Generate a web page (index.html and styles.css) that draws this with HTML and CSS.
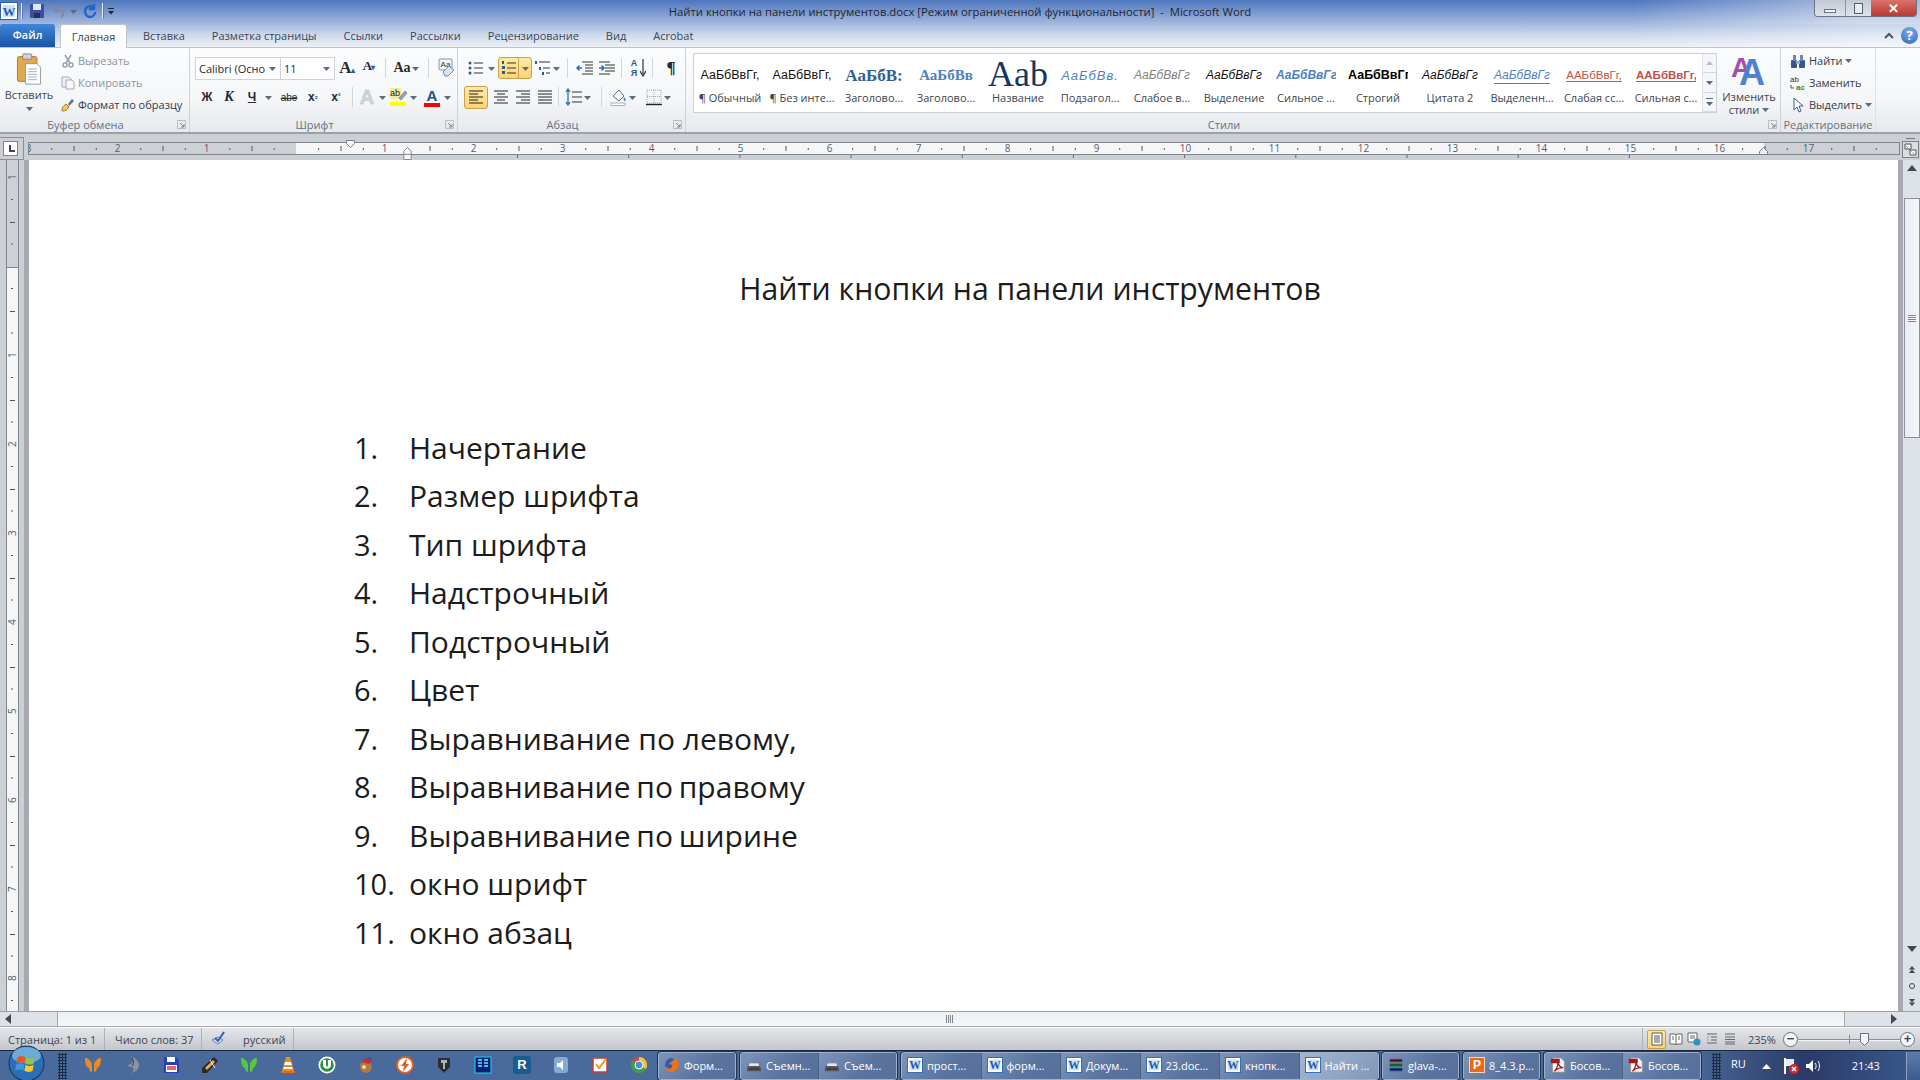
FILE: index.html
```html
<!DOCTYPE html>
<html lang="ru">
<head>
<meta charset="utf-8">
<title>Microsoft Word</title>
<link rel="stylesheet" href="styles.css">
</head>
<body>
<svg class="defs" width="0" height="0">
  <symbol id="word" viewBox="0 0 18 18"><rect x=".5" y=".5" width="17" height="17" fill="#fff" stroke="#2a63ad"/><rect x="3" y="3" width="12" height="12" fill="#cfe0f5"/><text x="9" y="14" font-size="13" font-weight="700" text-anchor="middle" fill="#1d5bb0" font-family="Liberation Serif">W</text></symbol>
  <symbol id="pdf" viewBox="0 0 18 18"><path d="M3 1h9l4 4v12H3z" fill="#fff" stroke="#999"/><path d="M1 2h10v5H1z" fill="#a8141c"/><path d="M5 16c3-3 4-7 4-10 1 4 3 6 6 6-4 0-7 1-10 4z" fill="none" stroke="#b3121c" stroke-width="1.5"/></symbol>
  <symbol id="drive" viewBox="0 0 18 18"><path d="M4 7h10l3 6v3H1v-3z" fill="#55575c"/><path d="M4 7h10l1 3H3z" fill="#e8e8e8"/><rect x="3" y="13" width="12" height="1" fill="#222"/></symbol>
  <symbol id="arrow" viewBox="0 0 7 5"><path d="M0 1h7L3.500 5z" fill="#5d6b7c"/></symbol>
  <symbol id="launch" viewBox="0 0 9 9"><path d="M.5.5h8v8h-8z" fill="none" stroke="#b8bec6"/><path d="M3 3l4 4M7 4v3H4" fill="none" stroke="#78828e"/></symbol>
  <symbol id="butterfly" viewBox="0 0 18 18"><path d="M8 8C6 3 3 2 1 2c0 5 1 9 4 10 0 2 1 4 3 4zM10 8c2-5 5-6 7-6 0 5-1 9-4 10 0 2-1 4-3 4z" fill="currentColor"/></symbol>
</svg>

<header class="titlebar">
  <div class="qat">
    <svg class="i18 qword"><use href="#word"/></svg>
    <span class="qsep"></span>
    <svg class="i16 qsave" viewBox="0 0 16 16"><rect x="1" y="1" width="14" height="14" rx="1" fill="#3b4f9e"/><rect x="4" y="1" width="8" height="6" fill="#dfe6f5"/><rect x="5" y="10" width="6" height="5" fill="#2a2f55"/></svg>
    <svg class="i16 qundo" viewBox="0 0 16 16"><path d="M4 3v5h5M5 8c3-4 8-2 7 3-.3 1.500-1 2.500-2 3" fill="none" stroke="#7f8a9e" stroke-width="2.400"/></svg>
    <svg class="a7 qarrow"><use href="#arrow"/></svg>
    <svg class="i16 qredo" viewBox="0 0 16 16"><path d="M12 1v5H7M12 5C8 1 3 4 3 8.500c0 3 2.500 5.500 5 5.500s5-2 5-5" fill="none" stroke="#1f69c4" stroke-width="2.400"/></svg>
    <span class="qsep qsep2"></span>
    <svg class="i8 qcust" viewBox="0 0 8 8"><path d="M1 1h6v1H1zM1 4h6L4 7.500z" fill="#20242c"/></svg>
  </div>
  <div class="doc-title">Найти кнопки на панели инструментов.docx [Режим ограниченной функциональности]  -  Microsoft Word</div>
  <div class="winbtns">
    <span class="wb wmin"><span class="minbar"></span></span>
    <span class="wb wmax"><span class="maxbox"></span></span>
    <span class="wb wclose">✕</span>
  </div>
</header>

<nav class="tabs">
  <span class="tab-file">Файл</span>
  <span class="tab-active">Главная</span>
  <span class="tab">Вставка</span>
  <span class="tab">Разметка страницы</span>
  <span class="tab">Ссылки</span>
  <span class="tab">Рассылки</span>
  <span class="tab">Рецензирование</span>
  <span class="tab">Вид</span>
  <span class="tab">Acrobat</span>
  <span class="tab-right">
    <svg class="chev" viewBox="0 0 10 8"><path d="M1 6l4-4 4 4" fill="none" stroke="#4d5560" stroke-width="2"/></svg>
    <span class="help">?</span>
  </span>
</nav>

<section class="ribbon">
  <div class="group g-clip">
    <div class="g-body clip-body">
      <div class="paste">
        <svg class="paste-ic" viewBox="0 0 28 36"><rect x="1" y="4" width="22" height="28" rx="2" fill="#e0a94f" stroke="#a77a30"/><rect x="7" y="1" width="10" height="6" rx="1" fill="#cfd3d8" stroke="#7d8288"/><path d="M10 12h13l4 4v19H10z" fill="#fff" stroke="#8a94a0"/><path d="M13 18h10M13 21h10M13 24h10M13 27h10M13 30h10" stroke="#8fa6c0"/></svg>
        <span class="paste-t">Вставить</span>
        <svg class="a7"><use href="#arrow"/></svg>
      </div>
      <div class="clip-col">
        <div class="clip-row dim"><svg class="i14" viewBox="0 0 14 14"><path d="M4 1l5 8M10 1L5 9" stroke="#9aa1aa" stroke-width="1.600" fill="none"/><circle cx="4" cy="11" r="2" fill="none" stroke="#9aa1aa" stroke-width="1.500"/><circle cx="10" cy="11" r="2" fill="none" stroke="#9aa1aa" stroke-width="1.500"/></svg>Вырезать</div>
        <div class="clip-row dim"><svg class="i14" viewBox="0 0 14 14"><path d="M1 1h7l2 2v8H1z" fill="#eef0f3" stroke="#a5abb3"/><path d="M5 4h6l2 2v7H5z" fill="#f7f8f9" stroke="#a5abb3"/></svg>Копировать</div>
        <div class="clip-row"><svg class="i14" viewBox="0 0 14 14"><path d="M1 13c0-4 1-5 4-7l3 3c-2 3-3 4-7 4z" fill="#efc75a" stroke="#a2822f"/><path d="M7 6l4-5 2 2-5 5z" fill="#5f6f8c"/></svg>Формат по образцу</div>
      </div>
    </div>
    <div class="g-label">Буфер обмена<svg class="launch"><use href="#launch"/></svg></div>
  </div>

  <div class="group g-font">
    <div class="g-body col">
      <div class="r r1">
        <span class="combo cfont">Calibri (Осно<svg class="a7"><use href="#arrow"/></svg></span>
        <span class="combo csize">11<svg class="a7"><use href="#arrow"/></svg></span>
        <span class="b w22 sA big">A<sup>▴</sup></span>
        <span class="b w22 sA small">A<sup>▾</sup></span>
        <span class="sep m4"></span>
        <span class="b w26 aa">Aa<svg class="a7"><use href="#arrow"/></svg></span>
        <span class="sep m6"></span>
        <svg class="i20 clear" viewBox="0 0 20 20"><rect x="3" y="1" width="13" height="11" rx="1" fill="#f4f6f8" stroke="#8792a0"/><text x="9.500" y="9" font-size="8" text-anchor="middle" fill="#333" font-family="Liberation Sans">Aa</text><path d="M7 14l6-6 5 4-6 6H9z" fill="#d7e4f2" stroke="#6f8bab"/></svg>
      </div>
      <div class="r r2">
        <span class="b w22 fb">Ж</span>
        <span class="b w22 fi">К</span>
        <span class="b w24 fu">Ч</span><svg class="a7 ar"><use href="#arrow"/></svg>
        <span class="b w22 fs">abe</span>
        <span class="b w22 fb sub">x<sub>₂</sub></span>
        <span class="b w22 fb sub">x<sup>²</sup></span>
        <span class="sep m4b"></span>
        <span class="b w22 fx">A</span><svg class="a7 ar"><use href="#arrow"/></svg>
        <svg class="i20 hl" viewBox="0 0 20 20"><rect x="1" y="1" width="11" height="11" fill="#f3e9a0"/><text x="6" y="9" font-size="9" fill="#222" text-anchor="middle" font-family="Liberation Sans">ab</text><path d="M10 11l6-7 2 2-6 7z" fill="#8ea3bd" stroke="#5a6c84" stroke-width=".6"/><rect x="1" y="15" width="16" height="4" fill="#ffff00"/></svg><svg class="a7 ar"><use href="#arrow"/></svg>
        <span class="b w22 fc">A<i class="bar red"></i></span><svg class="a7 ar"><use href="#arrow"/></svg>
      </div>
    </div>
    <div class="g-label">Шрифт<svg class="launch"><use href="#launch"/></svg></div>
  </div>

  <div class="group g-para">
    <div class="g-body col">
      <div class="r r1">
        <svg class="i18 m-b" viewBox="0 0 18 18"><g fill="#2a5b96"><circle cx="3" cy="4" r="1.500"/><circle cx="3" cy="9" r="1.500"/><circle cx="3" cy="14" r="1.500"/></g><path d="M7 4h9M7 9h9M7 14h9" stroke="#333" stroke-width="1.200"/></svg><svg class="a7 ar"><use href="#arrow"/></svg>
        <span class="active split"><svg class="i18" viewBox="0 0 18 18"><path d="M2 2h2v3H2zM2 7h3v3H2zM2 12h3v3H2z" fill="#2a5b96"/><path d="M7 4h9M7 9h9M7 14h9" stroke="#333" stroke-width="1.200"/></svg><span class="split-ar"><svg class="a7"><use href="#arrow"/></svg></span></span>
        <svg class="i18 m-l" viewBox="0 0 18 18"><path d="M1 2h2v3H1zM5 8h2v3H5zM8 13h2v3H8z" fill="#2a5b96"/><path d="M5 3h11M9 9h7M12 14h4" stroke="#333" stroke-width="1.200"/></svg><svg class="a7 ar"><use href="#arrow"/></svg>
        <span class="sep m7"></span>
        <svg class="i18 m-o" viewBox="0 0 18 18"><path d="M6 3h11M9 6h8M9 9h8M9 12h8M6 15h11" stroke="#333"/><path d="M6 9H1M3.500 6.500L1 9l2.500 2.500" fill="none" stroke="#2a6db5" stroke-width="1.500"/></svg>
        <svg class="i18 m-i" viewBox="0 0 18 18"><path d="M1 3h11M7 6h10M7 9h10M7 12h10M1 15h11" stroke="#333"/><path d="M1 9h5M3.500 6.500L6 9l-2.500 2.500" fill="none" stroke="#2a6db5" stroke-width="1.500"/></svg>
        <span class="sep m5"></span>
        <span class="b w22 sort">А<br>Я<svg class="sort-ar" viewBox="0 0 6 18"><path d="M3 0v15M0 12l3 5 3-5" fill="none" stroke="#333" stroke-width="1.200"/></svg></span>
        <span class="sep m8"></span>
        <span class="b w22 pil">¶</span>
      </div>
      <div class="r r2 r2p">
        <span class="active alignbtn"><svg class="i16" viewBox="0 0 16 16"><path d="M1 2h14M1 5h9M1 8h14M1 11h9M1 14h14" stroke="#222" stroke-width="1.100"/></svg></span>
        <svg class="i16 al" viewBox="0 0 16 16"><path d="M1 2h14M4 5h8M1 8h14M4 11h8M1 14h14" stroke="#222" stroke-width="1.100"/></svg>
        <svg class="i16 al" viewBox="0 0 16 16"><path d="M1 2h14M6 5h9M1 8h14M6 11h9M1 14h14" stroke="#222" stroke-width="1.100"/></svg>
        <svg class="i16 al" viewBox="0 0 16 16"><path d="M1 2h14M1 5h14M1 8h14M1 11h14M1 14h14" stroke="#222" stroke-width="1.100"/></svg>
        <span class="sep m5"></span>
        <svg class="i18 lsp" viewBox="0 0 18 18"><path d="M7 4h10M7 9h10M7 14h10" stroke="#333" stroke-width="1.200"/><path d="M3 1v16M1 4l2-3 2 3M1 14l2 3 2-3" fill="none" stroke="#2a6db5" stroke-width="1.300"/></svg><svg class="a7 ar"><use href="#arrow"/></svg>
        <span class="sep m9"></span>
        <svg class="i18 shd" viewBox="0 0 18 18"><path d="M3 8l6-6 5 6-5 5z" fill="#f1f3f6" stroke="#5a6c84"/><path d="M14 9c2 2 2 4 1 4s-2-2-1-4z" fill="#3b78c4"/><rect x="1" y="15" width="14" height="2.500" fill="#fff" stroke="#8792a0" stroke-width=".7"/></svg><svg class="a7 ar"><use href="#arrow"/></svg>
        <svg class="i18 brd" viewBox="0 0 18 18"><path d="M2 2h14v13H2zM9 2v13M2 8.500h14" fill="none" stroke="#9aa3ae" stroke-dasharray="1 1"/><path d="M1 16.500h16" stroke="#222" stroke-width="1.400"/></svg><svg class="a7 ar"><use href="#arrow"/></svg>
      </div>
    </div>
    <div class="g-label">Абзац<svg class="launch"><use href="#launch"/></svg></div>
  </div>

  <div class="group g-styles">
    <div class="g-body styles-body">
      <div class="gallery">
        <div class="st"><span class="sm s-n">АаБбВвГг,</span><span class="sl">¶ Обычный</span></div>
        <div class="st"><span class="sm s-n">АаБбВвГг,</span><span class="sl">¶ Без инте...</span></div>
        <div class="st"><span class="sm s-h1">АаБбВ:</span><span class="sl">Заголово...</span></div>
        <div class="st"><span class="sm s-h2">АаБбВв</span><span class="sl">Заголово...</span></div>
        <div class="st"><span class="sm s-t">Aab</span><span class="sl">Название</span></div>
        <div class="st"><span class="sm s-sub">АаБбВв.</span><span class="sl">Подзагол...</span></div>
        <div class="st"><span class="sm s-w">АаБбВвГг</span><span class="sl">Слабое в...</span></div>
        <div class="st"><span class="sm s-e">АаБбВвГг</span><span class="sl">Выделение</span></div>
        <div class="st"><span class="sm s-se">АаБбВвГг</span><span class="sl">Сильное ...</span></div>
        <div class="st"><span class="sm s-b">АаБбВвГг,</span><span class="sl">Строгий</span></div>
        <div class="st"><span class="sm s-e">АаБбВвГг</span><span class="sl">Цитата 2</span></div>
        <div class="st"><span class="sm s-q">АаБбВвГг</span><span class="sl">Выделенн...</span></div>
        <div class="st"><span class="sm s-r">ААБбВвГг,</span><span class="sl">Слабая сс...</span></div>
        <div class="st"><span class="sm s-rb">ААБбВвГг,</span><span class="sl">Сильная с...</span></div>
        <div class="gal-scroll">
          <span class="gs"><svg class="a7 up"><use href="#arrow"/></svg></span>
          <span class="gs"><svg class="a7"><use href="#arrow"/></svg></span>
          <span class="gs gs-more"><i></i><svg class="a7"><use href="#arrow"/></svg></span>
        </div>
      </div>
      <div class="chstyle">
        <span class="chA"><b class="a1">A</b><b class="a2">A</b></span>
        <span class="cht">Изменить</span>
        <span class="cht">стили <svg class="a7"><use href="#arrow"/></svg></span>
      </div>
    </div>
    <div class="g-label">Стили<svg class="launch"><use href="#launch"/></svg></div>
  </div>

  <div class="group g-edit">
    <div class="g-body edit-col">
      <div class="clip-row"><svg class="i16" viewBox="0 0 16 16"><rect x="1" y="7" width="6" height="8" rx="1" fill="#37558f"/><rect x="9" y="7" width="6" height="8" rx="1" fill="#37558f"/><rect x="3" y="2" width="3" height="6" fill="#6a85b8"/><rect x="10" y="2" width="3" height="6" fill="#6a85b8"/><rect x="6" y="8" width="4" height="3" fill="#9aaccc"/></svg>Найти <svg class="a7"><use href="#arrow"/></svg></div>
      <div class="clip-row"><svg class="i16" viewBox="0 0 16 16"><text x="0" y="7" font-size="8" fill="#333" font-family="Liberation Sans">ab</text><text x="6" y="15" font-size="8" font-weight="700" fill="#2e8b3d" font-family="Liberation Sans">ac</text><path d="M1 10v3h3" fill="none" stroke="#2a5b96"/></svg>Заменить</div>
      <div class="clip-row"><svg class="i16" viewBox="0 0 16 16"><path d="M4 1v12l3-3 2 5 2-1-2-5h4z" fill="#fff" stroke="#3d5f8e"/></svg>Выделить <svg class="a7"><use href="#arrow"/></svg></div>
    </div>
    <div class="g-label">Редактирование</div>
  </div>
</section>

<section class="hruler">
  <div class="corner"><span class="cornerbox"><i class="ell"></i></span></div>
  <div class="hstrip-wrap">
    <div class="hstrip">
      <div class="hnums"><span>3</span><span>2</span><span>1</span><span></span><span>1</span><span>2</span><span>3</span><span>4</span><span>5</span><span>6</span><span>7</span><span>8</span><span>9</span><span>10</span><span>11</span><span>12</span><span>13</span><span>14</span><span>15</span><span>16</span><span>17</span></div>
    </div>
    <div class="tabstops"></div>
    <svg class="mk mk-first" viewBox="0 0 9 8"><path d="M.5.500h8v3l-4 4-4-4z" fill="#f6f7f8" stroke="#7d838b"/></svg>
    <svg class="mk mk-hang" viewBox="0 0 9 14"><path d="M.5 4.500l4-4 4 4v9h-8z" fill="#f6f7f8" stroke="#7d838b"/><path d="M.5 8h8" stroke="#7d838b"/></svg>
    <svg class="mk mk-right" viewBox="0 0 9 8"><path d="M.5 4.500l4-4 4 4v3h-8z" fill="#eceef0" stroke="#7d838b"/></svg>
  </div>
  <div class="ruler-toggle"><i class="rt-bar"></i><span class="rt-box"><svg viewBox="0 0 13 13"><path d="M1 1h6v5H1zM6 7h6v5H6z" fill="#fff" stroke="#555"/><path d="M2 3l8 8" stroke="#555" stroke-dasharray="1 1"/></svg></span></div>
</section>

<main class="workspace">
  <div class="vruler"><div class="vnums"><span>1</span><span></span><span>1</span><span>2</span><span>3</span><span>4</span><span>5</span><span>6</span><span>7</span><span>8</span><span>9</span></div></div>
  <div class="shadow"></div>
  <article class="page">
    <h1 class="page-title">Найти кнопки на панели инструментов</h1>
    <div class="list">
      <div class="li"><span class="n">1.</span><span>Начертание</span></div>
      <div class="li"><span class="n">2.</span><span>Размер шрифта</span></div>
      <div class="li"><span class="n">3.</span><span>Тип шрифта</span></div>
      <div class="li"><span class="n">4.</span><span>Надстрочный</span></div>
      <div class="li"><span class="n">5.</span><span>Подстрочный</span></div>
      <div class="li"><span class="n">6.</span><span>Цвет</span></div>
      <div class="li"><span class="n">7.</span><span>Выравнивание по левому,</span></div>
      <div class="li"><span class="n">8.</span><span class="ws">Выравнивание по правому</span></div>
      <div class="li"><span class="n">9.</span><span class="ws">Выравнивание по ширине</span></div>
      <div class="li"><span class="n">10.</span><span>окно шрифт</span></div>
      <div class="li"><span class="n">11.</span><span>окно абзац</span></div>
    </div>
  </article>
  <div class="shadow"></div>
  <div class="vscroll">
    <svg class="sb-up" viewBox="0 0 10 6"><path d="M5 0l5 6H0z" fill="#444a52"/></svg>
    <div class="thumb"><i></i></div>
    <div class="sb-fill"></div>
    <svg class="sb-dn" viewBox="0 0 10 6"><path d="M0 0h10L5 6z" fill="#444a52"/></svg>
    <svg class="sb-n" viewBox="0 0 9 9"><path d="M4.500 0L8 4H1zM4.500 4L8 8H1z" fill="#444a52"/></svg>
    <span class="sb-dot"></span>
    <svg class="sb-n" viewBox="0 0 9 9"><path d="M1 1h7L4.500 5zM1 5h7L4.500 9z" fill="#444a52"/></svg>
  </div>
</main>

<div class="hscroll">
  <span class="hs-left"><svg viewBox="0 0 6 10"><path d="M6 0v10L0 5z" fill="#444a52"/></svg></span>
  <div class="hthumb"><i></i></div>
  <span class="hs-right"><svg viewBox="0 0 6 10"><path d="M0 0v10l6-5z" fill="#444a52"/></svg></span>
</div>

<footer class="status">
  <span class="st-cell st1">Страница: 1 из 1</span>
  <span class="st-cell st2">Число слов: 37</span>
  <span class="st-cell st3"><svg class="i16" viewBox="0 0 16 16"><path d="M2 9l6-3 5 3-5 4z" fill="#dfe8f5" stroke="#5b7eb0"/><path d="M5 7l3 3 6-9" fill="none" stroke="#2f62b3" stroke-width="2"/></svg><span class="lang">русский</span></span>
  <span class="st-right">
    <span class="vw vw-on"><svg class="i14" viewBox="0 0 14 14"><path d="M2 1h10v12H2z" fill="#fff" stroke="#555"/><path d="M4 4h6M4 6h6M4 8h6M4 10h6" stroke="#555"/></svg></span>
    <svg class="i14 vw2" viewBox="0 0 14 14"><path d="M1 2h5l1 1 1-1h5v10H8l-1 1-1-1H1z" fill="#fff" stroke="#666"/><path d="M7 3v9M3 5h2M3 7h2M9 5h2M9 7h2" stroke="#666"/></svg>
    <svg class="i14 vw2" viewBox="0 0 14 14"><path d="M1 1h9v9H1z" fill="#fff" stroke="#666"/><path d="M3 4h5M3 6h5" stroke="#666"/><circle cx="10" cy="10" r="3.500" fill="#2e8fc9"/></svg>
    <svg class="i14 vw2" viewBox="0 0 14 14"><path d="M2 2h10M6 5h6M6 8h6M2 11h10" stroke="#666"/><path d="M2 5h2M2 8h2" stroke="#999"/></svg>
    <svg class="i14 vw2" viewBox="0 0 14 14"><path d="M2 2h10M2 5h10M2 7.500h10M2 10h10M2 12h10" stroke="#666"/></svg>
    <span class="zoom">235%</span>
    <span class="zbtn">−</span>
    <span class="zslider"><i class="ztick"></i><svg class="zthumb" viewBox="0 0 9 13"><path d="M.5.500h8v8l-4 4-4-4z" fill="#f2f4f6" stroke="#6a727c"/></svg></span>
    <span class="zbtn">+</span>
  </span>
</footer>

<footer class="taskbar">
  <span class="orb"><svg viewBox="0 0 36 36"><circle cx="18" cy="18" r="17" fill="#2a6fb5" stroke="#13365f"/><ellipse cx="18" cy="10" rx="14" ry="8" fill="#9fd0ee" opacity=".6"/><path d="M9 12c3-2 6-1 8 0l-1 6c-2-1-5-2-8 0z" fill="#e8552a"/><path d="M18 12c3 2 5 2 8 0l-1 6c-3 2-6 1-8 0z" fill="#9ac43a"/><path d="M8 19c3-2 5-1 8 0l-1 6c-2-1-5-2-8 0z" fill="#3a9ae0"/><path d="M17 19c3 2 5 2 8 0l-1 6c-3 2-6 1-8 0z" fill="#f5c62f"/></svg></span>
  <span class="grip g1"></span>
  <div class="ql">
    <svg class="qi orange"><use href="#butterfly"/></svg>
    <svg class="qi" viewBox="0 0 18 18"><path d="M9 1c5 2 7 5 7 8s-2 6-7 8c2-3 2-5 0-6-2 0-4-1-5-2 2 0 5-1 5-2 1-2 1-4 0-6z" fill="#8b949e"/><path d="M9 2c2 3 2 6 0 8" fill="none" stroke="#2c3640"/></svg>
    <svg class="qi" viewBox="0 0 18 18"><path d="M2 1h12l3 3v13H2z" fill="#2840b8"/><rect x="5" y="1" width="8" height="5" fill="#fff"/><rect x="4" y="9" width="11" height="7" fill="#fff"/><path d="M5 11h9M5 13h9" stroke="#d83a44" stroke-width="1.300"/></svg>
    <svg class="qi" viewBox="0 0 18 18"><path d="M13 1l4 4-11 12-5 0 0-5z" fill="#2b2b2b"/><path d="M12 4l2 2-8 8-2-2z" fill="#eab054"/><path d="M9 4l5 8" stroke="#eee"/></svg>
    <svg class="qi green"><use href="#butterfly"/></svg>
    <svg class="qi" viewBox="0 0 18 18"><path d="M7 1h4l4 14H3z" fill="#f08a1c"/><path d="M6 6h6l1 3H5zM5 11h8l1 2H4z" fill="#fff"/><rect x="2" y="15" width="14" height="2" fill="#e07010"/></svg>
    <svg class="qi" viewBox="0 0 18 18"><circle cx="9" cy="9" r="8.500" fill="#fff"/><circle cx="9" cy="9" r="6.800" fill="#2f8f3d"/><path d="M5 4v5c0 5 8 5 8 0V4h-3v5c0 2-2 2-2 0V4z" fill="#fff"/></svg>
    <svg class="qi" viewBox="0 0 18 18"><circle cx="9" cy="11" r="6" fill="#b47a3c"/><path d="M5 6c2-5 8-5 11-3-2 1-3 3-4 5z" fill="#d0282c"/><path d="M9 3c2-2 5-2 6-1-1 1-2 2-3 2z" fill="#2a5fb5"/><circle cx="7" cy="11" r="2" fill="#eed9b0"/></svg>
    <svg class="qi" viewBox="0 0 18 18"><circle cx="9" cy="9" r="8" fill="#fff" stroke="#e0601e" stroke-width="2"/><path d="M11 2L5 10h3l-1 6 6-8h-3z" fill="#e0601e"/></svg>
    <svg class="qi" viewBox="0 0 18 18"><path d="M3 2h12v9l-6 6-6-6z" fill="#2c2e30"/><path d="M6 4h6v3H6zM8 7h2v6H8z" fill="#aeb3b8"/></svg>
    <svg class="qi" viewBox="0 0 18 18"><rect x="1" y="1" width="16" height="16" fill="#0a1f7a" stroke="#11d8f0"/><path d="M4 4h4M10 4h4M4 7h4M10 7h4M4 10h4M10 10h4" stroke="#6be8ff" stroke-width="1.500"/></svg>
    <span class="qi-r">R</span>
    <svg class="qi" viewBox="0 0 18 18"><rect x="2" y="1" width="14" height="16" rx="3" fill="#86aad4"/><path d="M5 7h3l3-3v10l-3-3H5z" fill="#fff"/></svg>
    <svg class="qi" viewBox="0 0 18 18"><rect x="2" y="2" width="14" height="14" fill="#fff" stroke="#c83a3a" stroke-width="1.500"/><path d="M5 8l3 4 7-9" fill="none" stroke="#e8a020" stroke-width="2"/></svg>
    <svg class="qi" viewBox="0 0 18 18"><circle cx="9" cy="9" r="8" fill="#d84a38"/><path d="M9 9L16 13A8 8 0 0 1 5 16z" fill="#3da14a"/><path d="M9 9L5 16A8 8 0 0 1 2 5z" fill="#3da14a"/><path d="M9 1a8 8 0 0 1 7 12L9 9z" fill="#f2c230"/><circle cx="9" cy="9" r="4" fill="#4a8fe0" stroke="#fff"/></svg>
  </div>
  <div class="tgroup tw1"><span class="tb"><svg class="ti" viewBox="0 0 18 18"><circle cx="9" cy="9" r="8" fill="#2a5fb5"/><path d="M9 1c5 0 8 4 8 8s-4 8-8 8c-5 0-8-3-8-7 2 3 7 4 8 1 1-2-2-3-3-3 1-3 5-3 5-6-1 0-1-1-2-1z" fill="#e8731e"/></svg>Форм...</span></div>
  <div class="tgroup tw2"><span class="tb"><svg class="ti"><use href="#drive"/></svg>Съемн...</span><span class="tb"><svg class="ti"><use href="#drive"/></svg>Съем...</span></div>
  <div class="tgroup tw3">
    <span class="tb"><svg class="ti"><use href="#word"/></svg>прост...</span>
    <span class="tb"><svg class="ti"><use href="#word"/></svg>форм...</span>
    <span class="tb"><svg class="ti"><use href="#word"/></svg>Докум...</span>
    <span class="tb"><svg class="ti"><use href="#word"/></svg>23.doc...</span>
    <span class="tb"><svg class="ti"><use href="#word"/></svg>кнопк...</span>
    <span class="tb tb-on"><svg class="ti"><use href="#word"/></svg>Найти ...</span>
  </div>
  <div class="tgroup tw4"><span class="tb"><svg class="ti" viewBox="0 0 18 18"><path d="M2 2h14v4H2z" fill="#a01f6e"/><path d="M2 7h14v4H2z" fill="#2f8e3f"/><path d="M2 12h14v4H2z" fill="#25408f"/><path d="M2 4h14M2 9h14M2 14h14" stroke="#111"/></svg>glava-...</span></div>
  <div class="tgroup tw5"><span class="tb"><span class="ppt">P</span>8_4.3.p...</span></div>
  <div class="tgroup tw6"><span class="tb"><svg class="ti"><use href="#pdf"/></svg>Босов...</span><span class="tb"><svg class="ti"><use href="#pdf"/></svg>Босов...</span></div>
  <div class="tray">
    <span class="grip g2"></span>
    <span class="ru">RU</span>
    <svg class="tr-up" viewBox="0 0 9 5"><path d="M4.500 0L9 5H0z" fill="#fff"/></svg>
    <svg class="tr-flag" viewBox="0 0 18 18"><path d="M3 1v16" stroke="#fff" stroke-width="2"/><path d="M4 2h8v7H4z" fill="#e9edf2"/><circle cx="12" cy="12" r="5" fill="#d8262c"/><path d="M10 10l4 4M14 10l-4 4" stroke="#fff" stroke-width="1.500"/></svg>
    <svg class="tr-vol" viewBox="0 0 18 18"><path d="M2 7h3l4-4v12l-4-4H2z" fill="#fff"/><path d="M11 6c1.500 2 1.500 4 0 6M14 4c2 3 2 7 0 10" fill="none" stroke="#fff"/></svg>
    <span class="clock">21:43</span>
    <span class="showdesk"></span>
  </div>
</footer>
</body>
</html>
```

FILE: styles.css
```css
*{box-sizing:border-box}
html,body{margin:0;padding:0;height:100%}
body{width:1920px;height:1080px;overflow:hidden;display:flex;flex-direction:column;font-family:"Open Sans","Noto Sans",sans-serif;font-size:11px;color:#3c4654;background:#ccd0d5}
svg{display:block;flex:none}
.defs{position:absolute}
.i8{width:8px;height:8px}.i14{width:14px;height:14px}.i16{width:16px;height:16px}.i18{width:18px;height:18px}.i20{width:20px;height:20px}
.a7{width:7px;height:5px;display:inline-block}

/* title bar */
.titlebar{height:24px;flex:none;display:flex;align-items:flex-start;position:relative;color:#1f2630;padding-top:2px}
.titlebar,.tabs{background-color:#dfe6f0}
.titlebar{background-image:linear-gradient(90deg,transparent 85%,rgba(255,255,255,.5) 97%),linear-gradient(180deg,#4d76bd 0,#7e9bd0 55%,#a4b9dd 100%)}
.tabs{background-image:linear-gradient(90deg,transparent 85%,rgba(255,255,255,.4) 97%),linear-gradient(180deg,#a4b9dd 0,#cfdaec 50%,#eef1f6 100%)}
.qat{display:flex;align-items:center;height:18px;width:640px;flex:none}
.qword{margin-left:0}
.qsep{width:1px;height:16px;background:#e6ecf6;margin-left:3px;box-shadow:1px 0 #5b78a8}
.qsave{margin-left:7px}.qundo{margin-left:6px}.qarrow{margin-left:3px}.qredo{margin-left:5px}.qsep2{margin-left:4px}.qcust{margin-left:4px}
.doc-title{width:660px;text-align:center;font-size:11.300px;line-height:20px;white-space:pre;margin-left:-10px}
.winbtns{display:flex;margin-left:auto;margin-right:3px;margin-top:-2px;height:17px;border:1px solid #6a7383;border-top:0;border-radius:0 0 4px 4px;overflow:hidden;width:103px}
.wb{display:flex;align-items:center;justify-content:center;background:linear-gradient(180deg,#c3cad5,#dfe3e9)}
.wmin{width:30px}.wmax{width:26px;border-left:1px solid #8c95a3}.wclose{flex:1;background:linear-gradient(180deg,#d8736a,#b93a32);color:#fff;font-size:13px;font-weight:700}
.minbar{width:12px;height:4px;background:#f4f6f8;border:1px solid #6a7383;margin-top:5px}
.maxbox{width:9px;height:11px;background:#e9edf2;border:1px solid #555e6c}

/* tabs */
.tabs{height:23px;flex:none;display:flex;align-items:flex-end;gap:27px;font-size:11px}
.tab{line-height:23px;color:#3c4654;white-space:nowrap}
.tab-file{width:55px;height:23px;line-height:22px;text-align:center;color:#fff;background:linear-gradient(180deg,#3f86da,#1a53a5);border-radius:3px 3px 0 0;font-weight:600;margin-right:-22px}
.tab-active{width:67px;height:24px;line-height:23px;text-align:center;background:linear-gradient(180deg,#fff,#fbfcfd);border:1px solid #bcc3cc;border-bottom:0;border-radius:3px 3px 0 0;margin-right:-11px;color:#3c4654;position:relative;z-index:1;margin-bottom:-1px}
.tab-right{margin-left:auto;display:flex;align-items:center;gap:7px;height:23px;padding-right:2px}
.chev{width:10px;height:8px}
.help{width:17px;height:17px;border-radius:50%;background:radial-gradient(circle at 50% 30%,#7fb0ea,#2a66b8);color:#fff;font-weight:700;font-size:13px;line-height:17px;text-align:center}

/* ribbon */
.ribbon{height:86px;flex:none;display:flex;background:linear-gradient(180deg,#fbfcfd 0,#f4f6f8 60%,#e6e9ed 100%);border-top:1px solid #bcc3cc;border-bottom:1px solid #9ba1a9}
.group{display:flex;flex-direction:column;border-right:1px solid #cdd2d9;height:100%;flex:none}
.g-clip{width:190px}.g-font{width:268px}.g-para{width:228px}.g-styles{width:1095px}.g-edit{width:95px;border-right:1px solid #dde0e5}
.g-body{flex:1;display:flex;min-height:0}
.g-label{height:15px;flex:none;line-height:15px;text-align:center;color:#66717f;font-size:11px;position:relative;padding-right:18px}
.g-edit .g-label{padding-right:0}
.launch{position:absolute;right:3px;top:3px;width:9px;height:9px}
.col{flex-direction:column;padding-top:9px;gap:7px}
.clip-body{padding-top:3px}
.paste{width:58px;display:flex;flex-direction:column;align-items:center;color:#3c4654}
.paste-ic{width:28px;height:32px;margin-top:2px}
.paste-t{margin-top:2px;line-height:15px}
.paste .a7{margin-top:4px}
.clip-col{margin-left:3px;padding-top:1px;display:flex;flex-direction:column;gap:5px}
.clip-row{display:flex;align-items:center;gap:3px;height:17px;white-space:nowrap;color:#333c48}
.clip-row.dim{color:#8d949d}
.r{display:flex;align-items:center;height:22px;flex:none}
.r1{padding-left:5px}.r2{padding-left:6px}
.b{display:flex;align-items:center;justify-content:center;height:22px;flex:none;color:#26292e}
.w22{width:22px}.w24{width:24px}.w26{width:26px}
.combo{display:flex;align-items:center;justify-content:space-between;height:23px;background:#fff;border:1px solid #ced3d9;padding:0 4px 0 3px;color:#26292e;flex:none}
.cfont{width:86px}.csize{width:55px;margin-right:1px;margin-left:-1px}
.sA{font-family:"Liberation Serif",serif;font-weight:700;align-items:baseline;padding-top:1px}
.sA sup{font-size:8px;color:#2a5b96;line-height:0;margin-left:-1px;font-family:"Liberation Sans"}
.sA.big{font-size:17px}.sA.small{font-size:13px}
.aa{font-family:"Liberation Serif",serif;font-weight:700;font-size:14px;gap:1px}
.sep{width:1px;height:20px;background:#d3d7dc;flex:none}
.m4{margin:0 7px 0 5px}.m4b{margin:0 3px 0 5px}.m5{margin:0 5px}.m6{margin:0 7px 0 9px}.m7{margin:0 8px 0 5px}.m8{margin:0 7px 0 3px}.m9{margin:0 8px 0 8px}
.ar{margin:0 2px 0 1px}
.fb{font-family:"Liberation Sans";font-weight:700;font-size:12px}
.fi{font-family:"Liberation Serif";font-style:italic;font-weight:700;font-size:14px}
.fu{font-family:"Liberation Sans";font-weight:700;font-size:12px;text-decoration:underline}
.fs{font-family:"Liberation Sans";font-size:10px;text-decoration:line-through;margin:0 2px 0 4px}
.sub + .sub{margin-left:1px}
.sub sub,.sub sup{font-size:8px;color:#2a5b96;line-height:0}
.fx{font-family:"Liberation Sans";font-weight:700;font-size:20px;color:#d3d6da;-webkit-text-stroke:.5px #b7bcc3}
.hl{margin-left:1px}
.fc{position:relative;font-family:"Liberation Sans";font-weight:700;font-size:15px;color:#284f86;padding-bottom:4px;margin-left:2px}
.bar{position:absolute;left:3px;right:3px;bottom:1px;height:4px}
.red{background:#ff0000}
.active{background:linear-gradient(180deg,#fde9a6,#fbd574);border:1px solid #c8a14a;border-radius:3px;display:flex;align-items:center;flex:none}
.m-b{margin:0 2px 0 4px}
.split{width:34px;height:22px;margin:0 0 0 1px;padding-left:1px}
.split .i18{width:18px;flex:none}
.split-ar{border-left:1px solid #c8a14a;height:100%;display:flex;align-items:center;justify-content:center;flex:1}
.m-l{margin-left:2px}
.m-o{margin-left:0}.m-i{margin-left:4px}
.sort{position:relative;flex-direction:column;font-family:"Liberation Sans";font-weight:700;font-size:9px;line-height:10px;color:#2a5b96;padding-right:8px}
.sort-ar{position:absolute;right:3px;top:2px;width:6px;height:18px}
.pil{font-family:"Liberation Serif";font-size:17px;font-weight:700}
.alignbtn{width:24px;height:23px;justify-content:center;margin-right:-1px}
.al{margin-left:6px}
.r2p .m5{margin:0 6px 0 5px}
.shd{margin-left:0}.brd{margin-left:7px}

/* styles */
.styles-body{padding:5px 0 0 7px;gap:5px}
.gallery{width:1024px;height:60px;background:#fff;border:1px solid #ccd1d7;display:flex;flex:none}
.st{width:72px;flex:none;display:flex;flex-direction:column;align-items:center}
.sm{height:31px;width:60px;overflow:hidden;text-align:center;white-space:nowrap;line-height:31px;color:#111;font-family:"Liberation Sans",sans-serif;font-size:12.500px;margin-top:6px;display:block}
.sl{line-height:16px;white-space:nowrap;color:#3c4654;font-size:11px;margin-top:-1px}
.s-h1{font:700 17px/31px "Liberation Serif",serif;color:#2e6096}
.s-h2{font:700 15px/31px "Liberation Serif",serif;color:#4f81bd}
.s-t{font:400 36px/29px "Liberation Serif",serif;color:#17365d}
.s-sub{font:italic 400 13px/31px "Liberation Sans",sans-serif;color:#4f81bd;letter-spacing:1px}
.s-w{font-style:italic;color:#808080;font-size:12px}
.s-e{font-style:italic;color:#111;font-size:12px}
.s-se{font-style:italic;font-weight:700;color:#4f81bd;font-size:12px}
.s-b{font-weight:700;color:#000}
.s-q{font-style:italic;color:#4f81bd;font-size:12px;text-decoration:underline;text-decoration-thickness:1px;text-underline-offset:4px}
.s-r{color:#c0504d;text-decoration:underline;text-underline-offset:2px;font-size:11.500px}
.s-rb{color:#c0504d;font-weight:700;text-decoration:underline;text-underline-offset:2px;font-size:11.500px}
.gal-scroll{margin-left:auto;width:14px;flex:none;display:flex;flex-direction:column;border-left:1px solid #dde0e5}
.gs{flex:1;display:flex;flex-direction:column;align-items:center;justify-content:center;background:#f4f6f8;border-bottom:1px solid #d6dae0;gap:2px}
.gs .up{transform:rotate(180deg);opacity:.4}
.gs-more i{width:7px;height:1px;background:#5d6b7c}
.chstyle{width:54px;display:flex;flex-direction:column;align-items:center;color:#3c4654;flex:none}
.chA{position:relative;height:37px;width:40px;display:block;font-family:"Liberation Sans";overflow:hidden}
.a1{position:absolute;left:2px;top:1px;color:#a54cb0;font-weight:700;font-size:28px;line-height:28px}
.a2{position:absolute;left:10px;top:3px;color:#4f81d0;font-weight:700;font-size:36px;line-height:34px}
.cht{display:flex;align-items:center;gap:3px;line-height:13px;white-space:nowrap}
.edit-col{flex-direction:column;padding:4px 0 0 9px;gap:5px}

/* rulers */
.hruler{height:27px;flex:none;display:flex;background:#ccd0d5;position:relative;box-shadow:inset 0 1px #9ba1a9}
.corner{width:24px;flex:none;height:23px;margin-top:4px;border:1px solid #8b9097;border-left:0;display:flex;align-items:center;justify-content:center;padding-right:2px}
.cornerbox{width:15px;height:15px;background:#fff;border:1px solid #80868e;display:block;position:relative}
.ell{position:absolute;left:5px;top:3px;width:6px;height:7px;border-left:2px solid #444;border-bottom:2px solid #444}
.hstrip-wrap{position:relative;width:1872px;margin-left:4px;flex:none;display:flex;flex-direction:column}
.hstrip{margin-top:9px;height:13px;border:1px solid #80868e;overflow:hidden;width:1872px;
 background-image:
  linear-gradient(90deg,#555 1px,transparent 1px),
  linear-gradient(90deg,#555 1px,transparent 1px),
  linear-gradient(90deg,#cdd1d6 267px,#f6f6f8 267px,#f6f6f8 1735px,#cdd1d6 1735px);
 background-size:89px 5px,44.500px 2px,100% 100%;
 background-position:44.500px 3px,22.250px 5px,0 0;
 background-repeat:repeat-x,repeat-x,no-repeat}
.hnums{display:flex;margin-left:-45px;color:#555d68;font-size:10px;line-height:11px}
.hnums span{width:89px;flex:none;text-align:center}
.tabstops{height:4px;margin-left:489px;width:1223px;background:linear-gradient(90deg,#666 1px,transparent 1px) 0 0/111.200px 3px repeat-x}
.mk{position:absolute}
.mk-first{left:318px;top:7px;width:9px;height:8px}
.mk-hang{left:375px;top:14px;width:9px;height:13px}
.mk-right{left:1731px;top:14px;width:9px;height:8px}
.ruler-toggle{flex:1;display:flex;flex-direction:column;align-items:center;padding-top:5px;gap:2px}
.rt-bar{width:9px;height:1px;background:#777}
.rt-box{width:17px;height:17px;border:1px solid #7d838b;display:flex;align-items:center;justify-content:center;background:#d9dce0}
.rt-box svg{width:13px;height:13px}

.workspace{flex:1;min-height:0;display:flex;background:#ccd0d5}
.vruler{width:13px;margin-left:6px;flex:none;border:1px solid #80868e;border-top:0;border-bottom:0;overflow:hidden;
 background-image:
  linear-gradient(180deg,#555 1px,transparent 1px),
  linear-gradient(180deg,#555 1px,transparent 1px),
  linear-gradient(180deg,#cdd1d6 107px,#80868e 107px,#80868e 108px,#f6f6f8 108px);
 background-size:5px 89px,2px 44.500px,100% 100%;
 background-position:3px 62px,4px 39px,0 0;
 background-repeat:repeat-y,repeat-y,no-repeat}
.vnums{display:flex;flex-direction:column;margin-top:-27px;color:#555d68;font-size:10px;line-height:11px}
.vnums span{height:89px;flex:none;writing-mode:vertical-rl;transform:rotate(180deg);text-align:center}
.shadow{width:5px;flex:none;background:#a6aaaf}
.vruler + .shadow{margin-left:5px}
.page{flex:none;width:1869px;background:#fff;padding:105px 134px 0 267px;color:#1c1c1c;font-family:"Open Sans",sans-serif}
.page-title{margin:0;text-align:center;font-weight:400;font-size:30.200px;line-height:48px;white-space:nowrap}
.list{margin-top:111px;padding-left:58px;font-size:30px;line-height:48.450px}
.li{display:flex;white-space:nowrap}
.n{width:55px;flex:none;font-size:29px}
.ws{word-spacing:-2px}
.vscroll{flex:none;width:17px;display:flex;flex-direction:column;align-items:center;background:#dde1e8;margin-left:0}
.sb-up{width:10px;height:6px;margin-top:5px}
.thumb{width:16px;height:240px;margin-top:27px;flex:none;background:linear-gradient(90deg,#e9ecf2,#f4f6fa);border:1px solid #8b929b;display:flex;align-items:center;justify-content:center}
.thumb i{width:8px;height:7px;display:block;background:repeating-linear-gradient(180deg,#7f868f 0,#7f868f 1px,transparent 1px,transparent 2px)}
.sb-fill{flex:1}
.sb-dn{width:10px;height:6px;margin-bottom:14px}
.sb-n{width:8px;height:8px}
.sb-dot{width:6px;height:6px;border:1px solid #444a52;border-radius:50%;margin:9px 0}
.sb-n:last-child{margin-bottom:5px}

.hscroll{height:16px;flex:none;display:flex;background:#dde1e8;border-top:1px solid #9a9fa6;border-bottom:1px solid #a6aaaf}
.hs-left{width:57px;flex:none;display:flex;align-items:center;padding-left:5px}
.hs-left svg,.hs-right svg{width:6px;height:10px}
.hthumb{width:1788px;flex:none;background:linear-gradient(180deg,#eceff3,#f6f7f9);border-left:1px solid #a6aaaf;border-right:1px solid #a6aaaf;display:flex;align-items:center;justify-content:center;margin-top:-1px;border-top:1px solid #9a9fa6;padding-right:4px}
.hthumb i{width:7px;height:8px;background:repeating-linear-gradient(90deg,#7f868f 0,#7f868f 1px,transparent 1px,transparent 2px)}
.hs-right{flex:1;display:flex;align-items:center;padding-left:46px;position:relative}

.status{height:23px;flex:none;display:flex;align-items:center;background:linear-gradient(180deg,#e4e6ea,#c4c7cc);border-top:1px solid #fff;color:#3c4654;white-space:nowrap;font-size:11px}
.st-cell{height:100%;display:flex;align-items:center;border-right:1px solid #aeb2b8;flex:none}
.st1{width:105px;padding-left:8px}.st2{width:97px;padding-left:10px}.st3{width:92px;padding-left:8px}
.lang{margin-left:17px}
.st-right{margin-left:auto;height:100%;display:flex;align-items:center;border-left:1px solid #aeb2b8;padding-left:4px;width:278px;flex:none}
.vw{display:flex;align-items:center;justify-content:center;flex:none}
.vw-on{width:19px;height:19px;background:linear-gradient(180deg,#fde9a6,#fbd574);border:1px solid #c8a14a;border-radius:2px}
.vw2{margin-left:4px}
.vw-on + .vw2{margin-left:3px}
.zoom{margin-left:11px}
.zbtn{width:15px;height:15px;border:1px solid #6a727c;border-radius:50%;background:#f2f4f6;color:#3c4654;line-height:12px;text-align:center;font-weight:700;font-size:13px;flex:none;font-family:"Liberation Sans"}
.zoom + .zbtn{margin-left:7px}
.zslider{width:102px;height:1px;background:#8b9097;position:relative;flex:none;box-shadow:0 1px #f4f5f6}
.ztick{position:absolute;left:51px;top:-4px;width:1px;height:9px;background:#8b9097}
.zthumb{position:absolute;left:62px;top:-6px;width:9px;height:13px}

.taskbar{height:30px;flex:none;display:flex;background:linear-gradient(90deg,#4a6a9b 0,#4a6a9b 88%,#2b3a66 94%,#3a5a90 100%);position:relative;border-top:1px solid #1b2a44;padding-top:1px;color:#fff}
.orb{position:absolute;left:8px;top:-6px;width:37px;height:37px}
.orb svg{width:37px;height:37px}
.grip{display:block;width:9px;height:26px;background-image:radial-gradient(circle,#1c2c44 1px,transparent 1.300px);background-size:3px 3px;flex:none}
.g1{margin-left:58px;margin-top:1px}
.ql{width:591px;display:flex;align-items:center;padding-left:17px;gap:21px;flex:none;height:26px}
.qi{width:18px;height:18px;flex:none}
.orange{color:#ea8a24}.green{color:#56c93a}
.qi-r{width:18px;height:18px;border-radius:3px;background:#175d8f;color:#fff;font-weight:700;font-size:13px;line-height:18px;text-align:center;flex:none;font-family:"Liberation Sans"}
.tgroup{display:flex;height:28px;border:1px solid #9fb0c8;border-radius:3px;box-shadow:0 0 0 1px #22334f;margin-right:4px;overflow:hidden;flex:none}
.tb{flex:1;min-width:0;display:flex;align-items:center;gap:4px;padding:0 0 2px 5px;white-space:nowrap;font-size:11px;background:linear-gradient(135deg,#7d95ba,#5a749f 60%,#56709a);color:#fff}
.tb + .tb{border-left:1px solid #4a6288}
.tb-on{background:linear-gradient(135deg,#a3b5d0,#8297ba)}
.ti{width:16px;height:16px;flex:none}
.tw1{width:78px}.tw2{width:157px}.tw3{width:478px;margin-right:3px}.tw4{width:77px}.tw5{width:77px}.tw6{width:157px;margin-right:0}
.ppt{width:16px;height:16px;flex:none;background:#e8691c;border:1px solid #f5d6b8;font-weight:700;font-size:12px;line-height:14px;text-align:center;font-family:"Liberation Sans"}
.tray{flex:1;display:flex;align-items:center;height:28px;position:relative}
.g2{margin-left:11px}
.ru{margin-left:10px;margin-top:-6px;font-size:11px}
.tr-up{width:9px;height:5px;margin-left:16px}
.tr-flag{width:18px;height:18px;margin-left:11px}
.tr-vol{width:18px;height:18px;margin-left:4px}
.clock{margin-left:30px;font-size:11px;margin-top:-2px}
.showdesk{position:absolute;right:0;top:0;bottom:0;width:14px;background:linear-gradient(180deg,#5a7dad,#3c5a8d);border-left:1px solid #8ea3c2}
```
